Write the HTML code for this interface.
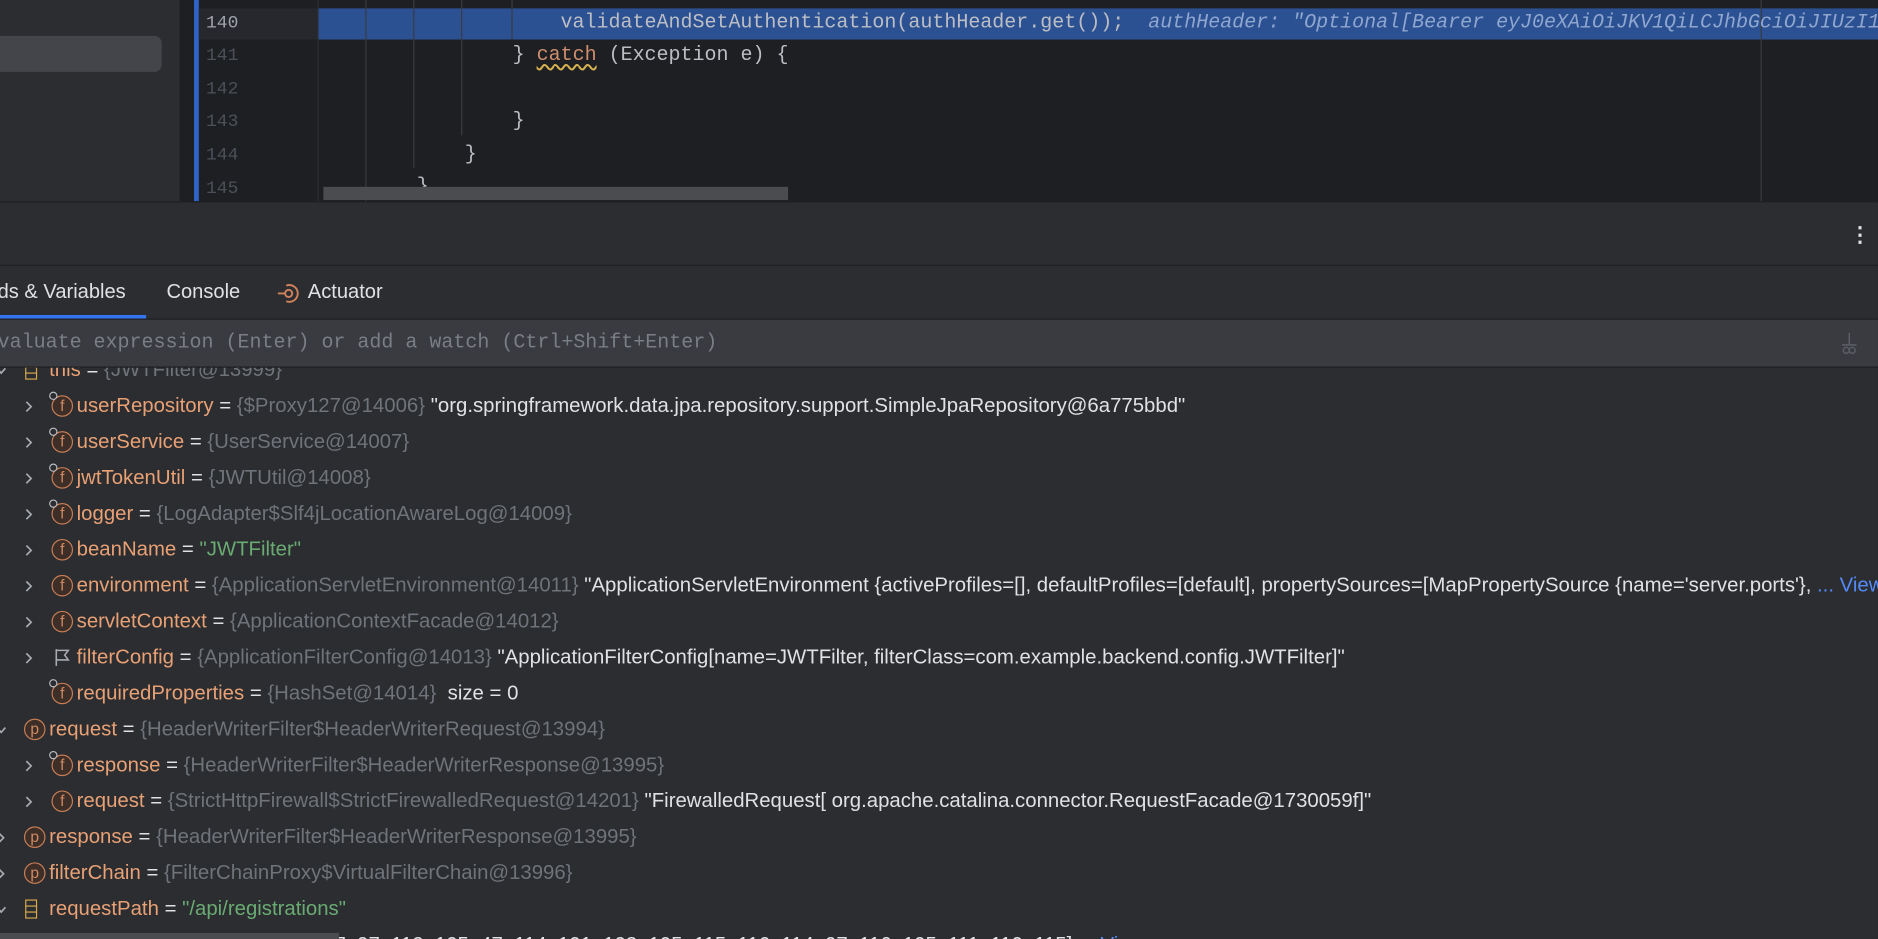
<!DOCTYPE html>
<html><head><meta charset="utf-8"><style>
*{margin:0;padding:0;box-sizing:border-box}
html,body{width:1878px;height:939px;overflow:hidden;background:#2b2d30}
#s{position:absolute;left:0;top:0;width:1568px;height:784px;transform:scale(1.19770);transform-origin:0 0;overflow:hidden;background:#2b2d30;font-family:"Liberation Sans",sans-serif}
.a{position:absolute}
.mono{font-family:"Liberation Mono",monospace;font-size:16.7px;white-space:pre}
.ln{position:absolute;left:172px;color:#4b5059;font-family:"Liberation Mono",monospace;font-size:15px}
.code{position:absolute;color:#bcbec4}
.guide{position:absolute;width:1px;background:#393b40}
.row{position:absolute;height:30px;line-height:30px;font-size:17px;white-space:nowrap;color:#dfe1e5}
.n{color:#e8a075}.g{color:#6f737a}.s{color:#6aab73}
.arr{position:absolute;top:10px;width:8px;height:11px}
.ic{position:absolute;top:6px;width:18px;height:18px;border:1.5px solid #c77d55;border-radius:50%;background:#3d2e28;color:#d08a62;font-size:13px;line-height:15px;text-align:center}
.lk{position:absolute;top:3px;width:7px;height:7px;border:1.5px solid #b8bbc0;border-radius:50%;background:#2b2d30}
</style></head><body><div id="s">
<svg width="0" height="0" style="position:absolute"><defs>
<symbol id="r" viewBox="0 0 8 11"><path d="M2 1.5L6 5.5L2 9.5" fill="none" stroke="#a8abb0" stroke-width="1.4"/></symbol>
<symbol id="d" viewBox="0 0 8 11"><path d="M0.5 3.5L4 7.5L7.5 3.5" fill="none" stroke="#a8abb0" stroke-width="1.4"/></symbol>
</defs></svg>
<div class="a" style="left:0;top:0;width:150px;height:168px;background:#2b2d30"></div>
<div class="a" style="left:0;top:30px;width:135px;height:30px;background:#43454a;border-radius:0 6px 6px 0"></div>
<div class="a" style="left:150px;top:0;width:1418px;height:168px;background:#1e1f22"></div>
<div class="a" style="left:162px;top:0;width:4px;height:168px;background:#3574f0;opacity:.8"></div>
<div class="a" style="left:166px;top:7px;width:99px;height:26px;background:#26282e"></div>
<div class="a" style="left:265px;top:7px;width:1303px;height:26px;background:#2c5193"></div>
<div class="guide" style="left:265px;top:0;height:168px;background:#2b2d30"></div>
<div class="guide" style="left:305px;top:0;height:168px"></div>
<div class="guide" style="left:345px;top:0;height:140px"></div>
<div class="guide" style="left:385px;top:0;height:113px"></div>
<div class="guide" style="left:427px;top:0;height:33px"></div>
<div class="guide" style="left:1470px;top:0;height:168px;background:#393b40"></div>
<div class="ln" style="top:11px;color:#a1a3ab">140</div>
<div class="ln" style="top:38px">141</div>
<div class="ln" style="top:66px">142</div>
<div class="ln" style="top:93px">143</div>
<div class="ln" style="top:121px">144</div>
<div class="ln" style="top:149px">145</div>
<div class="code mono" style="left:468px;top:10px">validateAndSetAuthentication(authHeader.get());  <span style="font-style:italic;color:#8fa6cf">authHeader: "Optional[Bearer eyJ0eXAiOiJKV1QiLCJhbGciOiJIUzI1</span></div>
<div class="code mono" style="left:428px;top:37px">} <span style="color:#cf8e6d;text-decoration:underline wavy #d6b350;text-underline-offset:3px">catch</span> (Exception e) {</div>
<div class="code mono" style="left:428px;top:92px">}</div>
<div class="code mono" style="left:388px;top:120px">}</div>
<div class="code mono" style="left:348px;top:147px">}</div>
<div class="a" style="left:270px;top:156px;width:388px;height:11px;background:#4a4c50"></div>
<div class="a" style="left:0;top:168px;width:1568px;height:1px;background:#1e1f22"></div>
<div class="a" style="left:1544px;top:186px;color:#dfe1e5;font-size:18px;font-weight:bold">⋮</div>
<div class="a" style="left:0;top:221px;width:1568px;height:1px;background:#1e1f22"></div>
<div class="a" style="left:-2px;top:234px;font-size:16.8px;color:#dfe1e5">ds &amp; Variables</div>
<div class="a" style="left:0;top:263px;width:122px;height:3px;background:#3574f0"></div>
<div class="a" style="left:139px;top:234px;font-size:16.8px;color:#dfe1e5">Console</div>
<svg class="a" style="left:230px;top:235px" width="22" height="20" viewBox="0 0 22 20"><path d="M9 3.5A7 7 0 1 1 9 16.5" fill="none" stroke="#d0825c" stroke-width="1.6"/><circle cx="11" cy="10" r="3" fill="none" stroke="#d0825c" stroke-width="1.6"/><path d="M2 10H8" stroke="#d0825c" stroke-width="1.6"/></svg>
<div class="a" style="left:257px;top:234px;font-size:16.8px;color:#dfe1e5">Actuator</div>
<div class="a" style="left:0;top:266px;width:1568px;height:1px;background:#1e1f22"></div>
<div class="a" style="left:0;top:267px;width:1568px;height:39px;background:#393b40"></div>
<div class="a mono" style="left:-2px;top:277px;color:#7a7e85">valuate expression (Enter) or add a watch (Ctrl+Shift+Enter)</div>
<svg class="a" style="left:1533px;top:276px" width="22" height="22" viewBox="0 0 22 22"><path d="M11 2V12M5 12H17" stroke="#5a5d63" stroke-width="1.3"/><circle cx="8.5" cy="16.5" r="2.5" fill="none" stroke="#5a5d63" stroke-width="1.2"/><circle cx="13.5" cy="16.5" r="2.5" fill="none" stroke="#5a5d63" stroke-width="1.2"/></svg>
<div class="a" style="left:0;top:306px;width:1568px;height:1px;background:#1e1f22"></div>
<div class="a" style="left:0;top:307px;width:1568px;height:477px;overflow:hidden">
<div class="row" style="left:0;top:-13px"><svg class="arr" style="left:-3px"><use href="#d"/></svg><span class="a" style="left:21px;top:7px;width:10px;height:16px;border:1.5px solid #d6a84a"></span><span class="a" style="left:21px;top:12px;width:10px;height:6px;border-top:1.5px solid #d6a84a;border-bottom:1.5px solid #d6a84a"></span><span style="position:absolute;left:41px"><span class="n">this</span> = <span class="g">{JWTFilter@13999}</span></span></div>
<div class="row" style="left:0;top:17px"><svg class="arr" style="left:20px"><use href="#r"/></svg><span class="ic" style="left:43px">f</span><span class="lk" style="left:41px"></span><span style="position:absolute;left:64px"><span class="n">userRepository</span> = <span class="g">{$Proxy127@14006}</span> "org.springframework.data.jpa.repository.support.SimpleJpaRepository@6a775bbd"</span></div>
<div class="row" style="left:0;top:47px"><svg class="arr" style="left:20px"><use href="#r"/></svg><span class="ic" style="left:43px">f</span><span class="lk" style="left:41px"></span><span style="position:absolute;left:64px"><span class="n">userService</span> = <span class="g">{UserService@14007}</span></span></div>
<div class="row" style="left:0;top:77px"><svg class="arr" style="left:20px"><use href="#r"/></svg><span class="ic" style="left:43px">f</span><span class="lk" style="left:41px"></span><span style="position:absolute;left:64px"><span class="n">jwtTokenUtil</span> = <span class="g">{JWTUtil@14008}</span></span></div>
<div class="row" style="left:0;top:107px"><svg class="arr" style="left:20px"><use href="#r"/></svg><span class="ic" style="left:43px">f</span><span class="lk" style="left:41px"></span><span style="position:absolute;left:64px"><span class="n">logger</span> = <span class="g">{LogAdapter$Slf4jLocationAwareLog@14009}</span></span></div>
<div class="row" style="left:0;top:137px"><svg class="arr" style="left:20px"><use href="#r"/></svg><span class="ic" style="left:43px">f</span><span style="position:absolute;left:64px"><span class="n">beanName</span> = <span class="s">"JWTFilter"</span></span></div>
<div class="row" style="left:0;top:167px"><svg class="arr" style="left:20px"><use href="#r"/></svg><span class="ic" style="left:43px">f</span><span style="position:absolute;left:64px"><span class="n">environment</span> = <span class="g">{ApplicationServletEnvironment@14011}</span> "ApplicationServletEnvironment {activeProfiles=[], defaultProfiles=[default], propertySources=[MapPropertySource {name='server.ports'}, <span style="color:#548af7">... View</span></span></div>
<div class="row" style="left:0;top:197px"><svg class="arr" style="left:20px"><use href="#r"/></svg><span class="ic" style="left:43px">f</span><span style="position:absolute;left:64px"><span class="n">servletContext</span> = <span class="g">{ApplicationContextFacade@14012}</span></span></div>
<div class="row" style="left:0;top:227px"><svg class="arr" style="left:20px"><use href="#r"/></svg><svg class="a" style="left:45px;top:7px" width="14" height="16"><path d="M2 1V15M2 2H12L9 6L12 10H2" fill="none" stroke="#a8abb0" stroke-width="1.3"/></svg><span style="position:absolute;left:64px"><span class="n">filterConfig</span> = <span class="g">{ApplicationFilterConfig@14013}</span> "ApplicationFilterConfig[name=JWTFilter, filterClass=com.example.backend.config.JWTFilter]"</span></div>
<div class="row" style="left:0;top:257px"><span class="ic" style="left:43px">f</span><span class="lk" style="left:41px"></span><span style="position:absolute;left:64px"><span class="n">requiredProperties</span> = <span class="g">{HashSet@14014}</span>&nbsp; size = 0</span></div>
<div class="row" style="left:0;top:287px"><svg class="arr" style="left:-3px"><use href="#d"/></svg><span class="ic" style="left:20px">p</span><span style="position:absolute;left:41px"><span class="n">request</span> = <span class="g">{HeaderWriterFilter$HeaderWriterRequest@13994}</span></span></div>
<div class="row" style="left:0;top:317px"><svg class="arr" style="left:20px"><use href="#r"/></svg><span class="ic" style="left:43px">f</span><span class="lk" style="left:41px"></span><span style="position:absolute;left:64px"><span class="n">response</span> = <span class="g">{HeaderWriterFilter$HeaderWriterResponse@13995}</span></span></div>
<div class="row" style="left:0;top:347px"><svg class="arr" style="left:20px"><use href="#r"/></svg><span class="ic" style="left:43px">f</span><span style="position:absolute;left:64px"><span class="n">request</span> = <span class="g">{StrictHttpFirewall$StrictFirewalledRequest@14201}</span> "FirewalledRequest[ org.apache.catalina.connector.RequestFacade@1730059f]"</span></div>
<div class="row" style="left:0;top:377px"><svg class="arr" style="left:-3px"><use href="#r"/></svg><span class="ic" style="left:20px">p</span><span style="position:absolute;left:41px"><span class="n">response</span> = <span class="g">{HeaderWriterFilter$HeaderWriterResponse@13995}</span></span></div>
<div class="row" style="left:0;top:407px"><svg class="arr" style="left:-3px"><use href="#r"/></svg><span class="ic" style="left:20px">p</span><span style="position:absolute;left:41px"><span class="n">filterChain</span> = <span class="g">{FilterChainProxy$VirtualFilterChain@13996}</span></span></div>
<div class="row" style="left:0;top:437px"><svg class="arr" style="left:-3px"><use href="#d"/></svg><span class="a" style="left:21px;top:7px;width:10px;height:16px;border:1.5px solid #d6a84a"></span><span class="a" style="left:21px;top:12px;width:10px;height:6px;border-top:1.5px solid #d6a84a;border-bottom:1.5px solid #d6a84a"></span><span style="position:absolute;left:41px"><span class="n">requestPath</span> = <span class="s">"/api/registrations"</span></span></div>
<div class="row" style="left:0;top:467px"><span class="ic" style="left:43px">f</span><span style="position:absolute;left:64px"><span class="n">value</span> = <span class="g">{byte[19]@14203}</span> [47, 97, 112, 105, 47, 114, 101, 103, 105, 115, 116, 114, 97, 116, 105, 111, 110, 115] <span style="color:#548af7">... View</span></span></div>
<div class="a" style="left:0;top:472px;width:283px;height:5px;background:#4a4c50"></div>
</div>
</div></body></html>
